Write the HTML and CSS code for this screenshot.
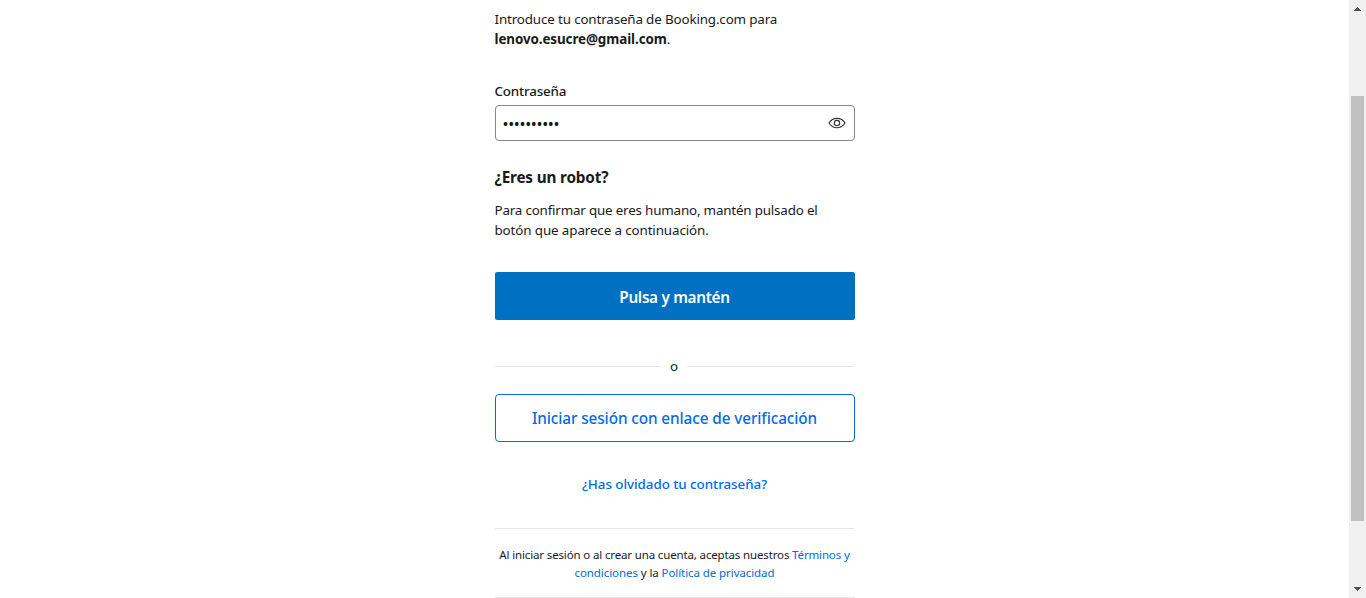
FILE: index.html
```html
<!DOCTYPE html>
<html lang="es">
<head>
<meta charset="utf-8">
<title>Inicia sesión</title>
<link rel="stylesheet" href="styles.css">
</head>
<body>
<div class="page">
  <main class="panel">
    <p class="intro"><span class="intro-line">Introduce tu contraseña de Booking.com para</span><br><span class="email"><b>lenovo.esucre@gmail.com</b>.</span></p>
    <div class="label">Contraseña</div>
    <div class="field">
      <span class="dots">••••••••••</span>
      <svg class="eye" width="18" height="12" viewBox="0 0 18 12" fill="none" stroke="#333" stroke-width="1.15"><path d="M1 6C2.8 3 5.500 1.300 9 1.300S15.200 3 17 6C15.200 9 12.500 10.700 9 10.700S2.800 9 1 6Z"/><circle cx="9" cy="6" r="2.700"/></svg>
    </div>
    <h2 class="robot">¿Eres un robot?</h2>
    <p class="hint"><span class="hint-a">Para confirmar que eres humano, mantén pulsado el</span><br><span class="hint-b">botón que aparece a continuación.</span></p>
    <button class="hold"><span>Pulsa y mantén</span></button>
    <div class="divider"><span>o</span></div>
    <button class="link-button"><span>Iniciar sesión con enlace de verificación</span></button>
    <a class="forgot"><span>¿Has olvidado tu contraseña?</span></a>
    <p class="legal"><span class="legal-a">Al iniciar sesión o al crear una cuenta, aceptas nuestros <a>Términos y</a></span><br><span class="legal-b"><a>condiciones</a> y la <a>Política de privacidad</a></span></p>
  </main>
  <div class="scrollbar">
    <svg class="arrow" width="7" height="4" viewBox="0 0 7 4" fill="#505050" shape-rendering="crispEdges"><path d="M3 0h1v1h1v1h1v1h1v1H0V3h1V2h1V1h1z"/></svg>
    <div class="thumb"></div>
    <svg class="arrow" width="7" height="4" viewBox="0 0 7 4" fill="#505050" shape-rendering="crispEdges"><path d="M0 0h7v1H6v1H5v1H4v1H3V3H2V2H1V1H0z"/></svg>
  </div>
</div>
</body>
</html>
```
FILE: styles.css
```css
* { box-sizing: border-box; }
body { margin: 0; background: #fff; color: #1a1a1a; font: 13.4px/20px "Noto Sans", "Open Sans", sans-serif; overflow: hidden; }
p, h2 { margin: 0; }
span { white-space: nowrap; }
.page { display: flex; height: 598px; }
.panel { width: 360px; margin: 0 auto; padding: 9px 0 0; display: flex; flex-direction: column; }
.intro { height: 40px; }
.intro-line { letter-spacing: -.15px; }
.email { letter-spacing: -.09px; }
.label { margin-top: 32px; height: 20px; font-weight: 500; letter-spacing: -.18px; }
.field { margin-top: 4px; height: 36px; border: 1px solid #868686; border-radius: 4px; display: flex; align-items: center; justify-content: space-between; padding: 0 8px 0 7px; }
.dots { padding-top: 1px; font-size: 16px; letter-spacing: -.35px; }
.robot { margin-top: 24px; height: 24px; font-size: 15.3px; line-height: 24px; font-weight: 700; letter-spacing: -.17px; }
.hint { margin-top: 11px; height: 40px; }
.hint-a { letter-spacing: -.19px; }
.hint-b { letter-spacing: -.12px; }
button { font-family: inherit; font-size: 15.3px; line-height: 24px; height: 48px; padding: 0; flex: none; }
.hold { margin-top: 32px; padding-top: 2px; background: #0071c2; color: #fff; border: 0; border-radius: 2px; font-weight: 600; letter-spacing: -.3px; }
.divider { margin-top: 36px; height: 20px; display: flex; align-items: center; gap: 9px; padding-right: 1px; }
.divider::before, .divider::after { content: ""; flex: 1; height: 1px; background: #e7e7e7; }
.link-button { margin-top: 18px; background: #fff; color: #006ce4; border: 1px solid #006ce4; border-radius: 4px; font-weight: 500; letter-spacing: -.09px; }
.forgot { margin-top: 32px; height: 20px; text-align: center; color: #006ce4; font-weight: 500; letter-spacing: -.05px; }
.legal { margin-top: 34px; height: 70px; padding-top: 17px; border-top: 1px solid #e7e7e7; border-bottom: 1px solid #e7e7e7; font-size: 11.5px; line-height: 18px; text-align: center; }
.legal-a { letter-spacing: -.145px; }
.legal-b { letter-spacing: -.08px; }
.legal a { color: #006ce4; }
.scrollbar { width: 17px; background: #f0f0f0; display: flex; flex-direction: column; align-items: center; padding: 7px 0; }
.thumb { width: 13px; height: 425px; margin: 85px 0 auto; background: #c1c1c1; }
```
